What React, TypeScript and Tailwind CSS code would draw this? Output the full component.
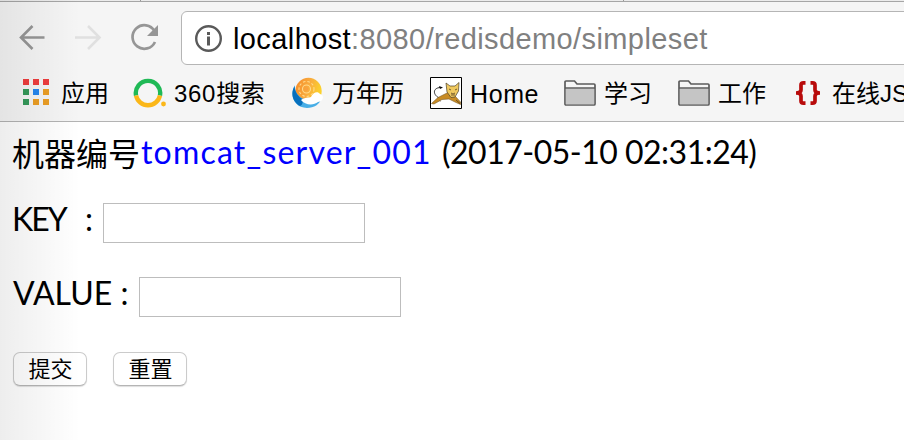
import type { ReactNode } from "react";

function Bookmark({ icon, label, width, className }: { icon: ReactNode; label: string; width: string; className: string }) {
  return (
    <a className={`flex h-8 shrink-0 items-center whitespace-nowrap ${width}`}>
      {icon}
      <span className={className}>{label}</span>
    </a>
  );
}

function AppsIcon() {
  const colors = ["#ee3d3d", "#ee3d3d", "#ee3d3d", "#35995a", "#2586ee", "#eb9e25", "#35995a", "#eb9e25", "#eb9e25"];
  return (
    <span className="-mt-0.5 grid shrink-0 grid-cols-3 gap-1">
      {colors.map((c, i) => (
        <i key={i} className="size-1.5" style={{ backgroundColor: c }} />
      ))}
    </span>
  );
}

function SearchRing() {
  return (
    <svg width="33" height="30" viewBox="0 0 33 30" fill="none" className="shrink-0" strokeWidth="4.4">
      <path d="M3.050 17.500A12.200 12.200 0 1 1 26.950 17.500" stroke="#1fb956" />
      <path d="M3.050 17.500A12.200 12.200 0 0 0 26.950 17.500" stroke="#fbb718" />
      <circle cx="30.500" cy="26" r="2.400" fill="#fbb718" />
    </svg>
  );
}

function CalendarIcon() {
  return (
    <svg width="32" height="32" viewBox="0 0 32 32" className="shrink-0">
      <defs>
        <linearGradient id="sun" x1="0" x2="1" y1="0" y2=".3">
          <stop offset="0" stopColor="#f58a28" />
          <stop offset=".55" stopColor="#f9ab3e" />
          <stop offset="1" stopColor="#fbd12c" />
        </linearGradient>
      </defs>
      <circle cx="17.500" cy="14" r="13.200" fill="url(#sun)" />
      <path d="M4 8C-2 18 3 31 16 31 23 31 29 27 30 22 25 25 18 26 13 22 6 19 3 13 4 8Z" fill="#48aee6" />
      <path d="M3.500 9C-1 17 2 25 9 29 12 28 11 25 13 23 7 20 4 15 3.500 9Z" fill="#0870bd" />
      <path d="M10 23C14 20 18 21 20 20 22 15 27 14 29 17 34 18 32 25 27 25 22 29 14 28 10 23Z" fill="#fff" />
      <g fill="none" stroke="#ffda8c" strokeWidth="1.100">
        <circle cx="15.500" cy="12" r="4" />
        <circle cx="15.500" cy="12" r="7.500" strokeDasharray="2.500 2" />
      </g>
      <circle cx="15.500" cy="12" r="1.800" fill="#f9a13f" />
    </svg>
  );
}

function TomcatIcon() {
  return (
    <svg width="32" height="32" viewBox="0 0 32 32" className="shrink-0">
      <path d="M.5.5h31v31H.5Z" fill="#fff" stroke="#000" />
      <path d="M9 21C2 17 3 10 12 10.500" fill="none" stroke="#333" strokeWidth="1" />
      <path d="m9 9 4 1.500-3 1.500Zm-1 12 3 3.500-3-1Z" fill="#111" />
      <path d="M1.500 26.500 8 20.500 18 15.500 25 19 30.500 25V27.500L25 25 19 22 12 22.500 4 27Z" fill="#c88b24" stroke="#785a25" strokeWidth=".6" />
      <path d="M16 6 20 9H25L29 5.500 28.500 14 25 20 21 20.500 17 15Z" fill="#f0c95f" stroke="#4b402a" strokeWidth=".7" />
      <path d="m19 12 2 1m6-1-2 1m-4 3 2 1 2-1m-4 2h4M26 23l4 3.500" fill="none" stroke="#554020" strokeWidth=".8" />
    </svg>
  );
}

function FolderIcon() {
  return (
    <svg width="32" height="26" viewBox="0 0 32 26" className="shrink-0">
      <path d="M1 24V2Q1 1 2 1H10.500L13 4H30Q31 4 31 5V24Q31 25 30 25H2Q1 25 1 24Z" fill="#f5f5f5" stroke="#5b5b5b" strokeWidth="1.700" />
      <path d="M1.800 8.500H30.200V24.200H1.800Z" fill="#c5c5c5" />
      <path d="M1 8H31" stroke="#5b5b5b" strokeWidth="1.500" />
    </svg>
  );
}

function BracesIcon() {
  return (
    <svg width="24" height="24" viewBox="0 0 24 24" fill="none" stroke="#b80b0b" strokeWidth="3.700" className="shrink-0">
      <path d="M9.500 1.900H7.500Q5 1.900 5 4V9Q5 12 0 12 5 12 5 15V20Q5 22.100 7.500 22.100H9.500M14.500 1.900H16.500Q19 1.900 19 4V9Q19 12 24 12 19 12 19 15V20Q19 22.100 16.500 22.100H14.500" />
    </svg>
  );
}

export default function App() {
  const label = "pt-0.5 text-2xl leading-8";
  const button = "h-[34px] w-[74px] rounded-[7px] border border-[#cbcbcb] border-b-[#b5b5b5] bg-white pb-px pl-px shadow-[0_1px_1px_#0002]";
  return (
    <div className="relative h-[440px] w-[904px] overflow-hidden bg-white font-['Liberation_Sans','Noto_Sans_CJK_SC',sans-serif] text-black">
      <header className="h-[122px] border-b border-[#b3b3b3] bg-[#f5f5f5]">
        <div className="flex h-0.5 border-b border-[#a6a6a6] bg-[#ececec]">
          <i className="ml-[140px] h-px w-px bg-[#999]" />
          <i className="ml-[482px] h-px w-px bg-[#999]" />
        </div>
        <div className="flex h-[63px] items-start pt-[9px]">
          <svg width="181" height="54" viewBox="0 0 181 54" fill="none" className="shrink-0">
            <path d="M44.500 26.500H21M32.500 15 21 26.500 32.500 38" stroke="#969696" strokeWidth="2.600" />
            <path d="M75 26.500H99M88 15 99.500 26.500 88 38" stroke="#e0e0e0" strokeWidth="2.600" />
            <path d="M154.500 20A11.800 11.800 0 1 0 155 31" stroke="#969696" strokeWidth="2.700" />
            <path d="M158 14V25H147Z" fill="#969696" />
          </svg>
          <div className="flex h-[54px] w-[740px] shrink-0 items-center rounded-l-md border border-[#b5b5b5] bg-white pl-3">
            <svg width="29" height="29" viewBox="0 0 29 29" fill="none" className="shrink-0">
              <circle cx="14.500" cy="14.500" r="12.300" stroke="#5a5a5a" strokeWidth="2.400" />
              <path d="M14.500 8v3m0 1.500V21.500" stroke="#5a5a5a" strokeWidth="3" />
            </svg>
            <span className="ml-2.5 whitespace-nowrap pt-px text-[29px] leading-8 tracking-[.4px] text-[#808080]">
              <span className="text-black">localhost</span>:8080/redisdemo/simpleset
            </span>
          </div>
        </div>
        <nav className="flex h-14 items-center pl-[23px]">
          <Bookmark width="w-[110px]" icon={<AppsIcon />} label="应用" className={`${label} ml-3`} />
          <Bookmark width="w-[158px]" icon={<SearchRing />} label="360搜索" className={`${label} ml-2 tracking-[.7px]`} />
          <Bookmark width="w-[139px]" icon={<CalendarIcon />} label="万年历" className={`${label} ml-[9px]`} />
          <Bookmark width="w-[134px]" icon={<TomcatIcon />} label="Home" className="ml-2 pt-0.5 text-[25px] leading-8 tracking-[.6px]" />
          <Bookmark width="w-[114px]" icon={<FolderIcon />} label="学习" className={`${label} ml-2`} />
          <Bookmark width="w-[118px]" icon={<FolderIcon />} label="工作" className={`${label} ml-2`} />
          <Bookmark width="w-[150px]" icon={<BracesIcon />} label="在线JSON" className={`${label} ml-3`} />
        </nav>
      </header>
      <main className="pl-[13px] pt-3 font-['Lato','Noto_Sans_CJK_SC',sans-serif] text-[32px] leading-10">
        <p className="flex h-10 whitespace-pre">
          <span className="-ml-px w-[129px]">机器编号</span>
          <span className="-mt-0.5 w-[301px] tracking-[1.2px] text-[#00f]">tomcat_server_001</span>
          <span className="-mt-0.5 tracking-[-.5px]">(2017-05-10 02:31:24)</span>
        </p>
        <label className="mt-[29px] flex h-10">
          <span className="-mt-1 flex w-[90px] whitespace-pre"><span className="-ml-px w-[73px] tracking-[-2px]">KEY</span>:</span>
          <input className="h-10 w-[262px] border border-[#bdbdbd] bg-white px-2 outline-none" />
        </label>
        <label className="mt-[34px] flex h-10">
          <span className="-mt-1 w-[126px] whitespace-pre">VALUE :</span>
          <input className="h-10 w-[262px] border border-[#bdbdbd] bg-white px-2 outline-none" />
        </label>
        <div className="mt-[35px] flex gap-[26px] text-[22px] leading-8">
          <button className={button}>提交</button>
          <button className={button}>重置</button>
        </div>
      </main>
      <div className="pointer-events-none absolute inset-y-0 left-0 w-20 bg-linear-to-r from-black/7 to-transparent" />
    </div>
  );
}
